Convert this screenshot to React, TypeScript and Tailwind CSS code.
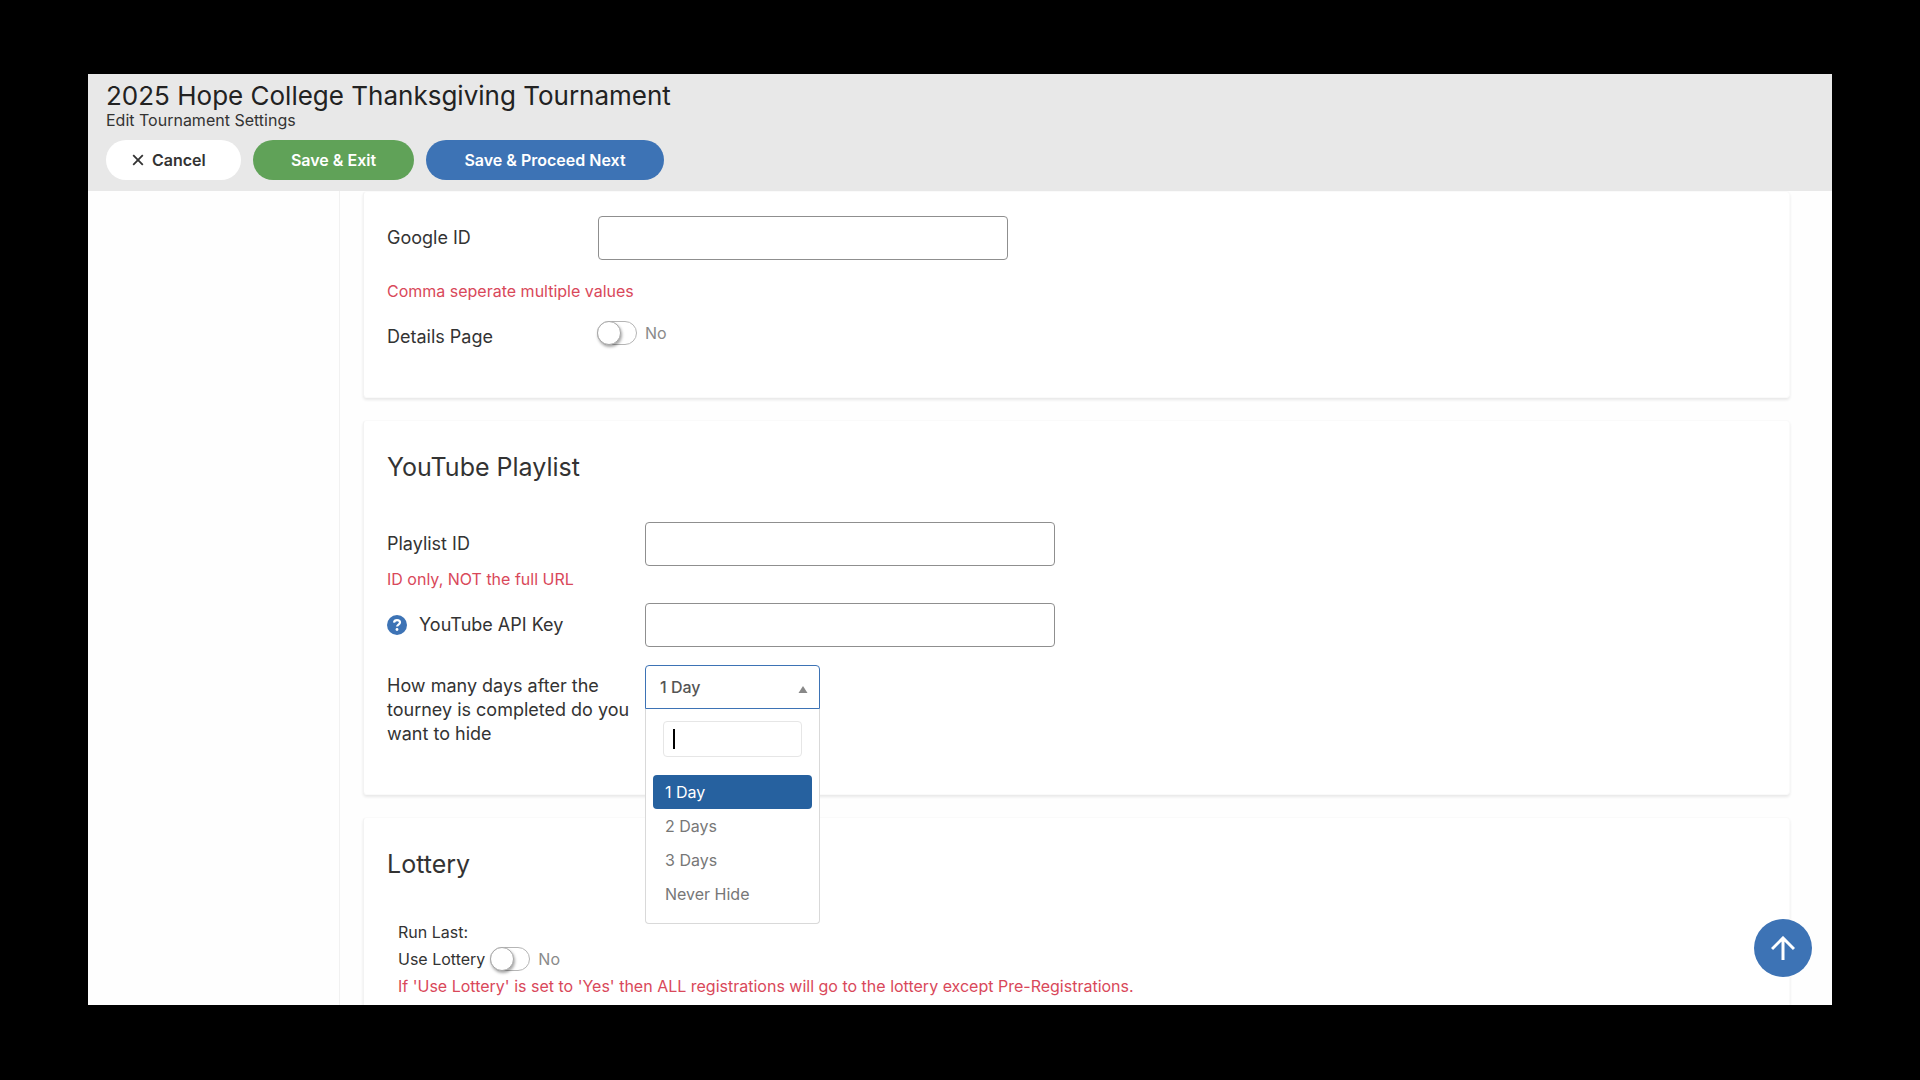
import { useState } from 'react';
import type { ReactNode } from 'react';

const DAY_OPTIONS = ['1 Day', '2 Days', '3 Days', 'Never Hide'];

function Card({ title, className = '', children }: { title?: string; className?: string; children: ReactNode }) {
  return (
    <section className={`rounded-sm border border-[#fafafa] border-l-[#f3f3f3] bg-white px-[23px] shadow-[0_2px_3px_rgba(0,0,0,0.09)] ${className}`}>
      {title && <h2 className="text-[25px] leading-8 text-[#333]">{title}</h2>}
      {children}
    </section>
  );
}

function Toggle({ id, checked, onChange }: { id: string; checked: boolean; onChange: (value: boolean) => void }) {
  return (
    <span className="flex items-center gap-2">
      <span className="relative flex h-6 w-10 shrink-0">
        <input
          id={id}
          type="checkbox"
          checked={checked}
          onChange={(e) => onChange(e.target.checked)}
          className="peer h-6 w-10 cursor-pointer appearance-none rounded-full border border-[#b5b5b5] bg-white checked:bg-[#3d73b5]"
        />
        <span className="pointer-events-none absolute top-0 left-0 size-6 rounded-full border border-[#a8a8a8] bg-white shadow-[1px_2px_3px_rgba(0,0,0,0.35)] peer-checked:left-4" />
      </span>
      <span className="text-base text-[#8a8a8a]">{checked ? 'Yes' : 'No'}</span>
    </span>
  );
}

function TextField({ id }: { id: string }) {
  const [value, setValue] = useState('');
  return (
    <input
      id={id}
      type="text"
      value={value}
      onChange={(e) => setValue(e.target.value)}
      className="h-11 w-[410px] rounded border border-[#8f8f8f] bg-white px-3 text-base outline-none focus:border-[#3d73b5]"
    />
  );
}

function DaysSelect({ id }: { id: string }) {
  const [selected, setSelected] = useState('1 Day');
  const [open, setOpen] = useState(true);
  const [search, setSearch] = useState('');
  const options = DAY_OPTIONS.filter((o) => o.toLowerCase().includes(search.toLowerCase()));

  return (
    <div className="relative h-11 w-[175px]">
      <select
        id={id}
        value={selected}
        onChange={(e) => setSelected(e.target.value)}
        onMouseDown={(e) => { e.preventDefault(); setOpen(!open); }}
        className="h-11 w-full appearance-none rounded-t border border-[#3d73b5] bg-white px-3.5 text-base font-medium text-[#555] outline-none"
      >
        {DAY_OPTIONS.map((o) => <option key={o}>{o}</option>)}
      </select>
      <svg viewBox="0 0 10 8" className="pointer-events-none absolute top-5 right-3 h-2 w-2.5 fill-[#888]">
        <path d="M5 1 9.500 8H.5z" />
      </svg>

      {open && (
        <div className="absolute top-full left-0 z-10 w-full rounded-b border border-t-0 border-[#d9d9d9] bg-white px-[7px] py-3">
          <div className="relative mx-2.5 mb-[18px]">
            <input
              type="text"
              aria-label="Search"
              value={search}
              onChange={(e) => setSearch(e.target.value)}
              className="h-9 w-full rounded border border-[#e6e6e6] px-3 text-base outline-none"
            />
            {!search && <span className="pointer-events-none absolute top-2 left-2.5 h-5 w-0.5 bg-black" />}
          </div>
          {options.map((o) => (
            <button
              key={o}
              type="button"
              onClick={() => { setSelected(o); setOpen(false); }}
              className={`block h-[34px] w-full rounded px-3 text-left text-base ${o === selected ? 'bg-[#26619f] text-white' : 'text-[#777]'}`}
            >
              {o}
            </button>
          ))}
        </div>
      )}
    </div>
  );
}

export default function App() {
  const [details, setDetails] = useState(false);
  const [lottery, setLottery] = useState(false);

  return (
    <div className="h-screen bg-black px-[88px] pt-[74px] pb-[75px] font-[Inter,'Liberation_Sans',sans-serif] text-lg leading-6 text-[#333]">
      <div className="relative flex h-full flex-col overflow-hidden bg-[#fefefe]">
        <header className="shrink-0 bg-[#e8e8e8] px-[18px] pt-1.5 pb-[11px]">
          <h1 className="text-[26px] leading-8 text-[#222]">2025 Hope College Thanksgiving Tournament</h1>
          <p className="text-base leading-4">Edit Tournament Settings</p>
          <div className="mt-3 flex items-center gap-3 text-base font-semibold">
            <button type="button" className="flex h-10 w-[135px] items-center gap-2 rounded-full bg-white pl-[26px]">
              <svg viewBox="0 0 10 10" className="size-3 stroke-[#333]" strokeWidth="1.500">
                <path d="M1 1l8 8M9 1L1 9" />
              </svg>
              Cancel
            </button>
            <button type="button" className="h-10 w-[161px] rounded-full bg-[#60a258] text-white">Save &amp; Exit</button>
            <button type="button" className="h-10 w-[238px] rounded-full bg-[#3d73b5] text-white">Save &amp; Proceed Next</button>
          </div>
        </header>

        <div className="flex min-h-0 flex-1">
          <aside className="w-[252px] shrink-0 border-r border-[#f1f1f1]" />
          <main className="flex min-w-0 flex-1 flex-col gap-[22px] pr-[42px] pl-[23px]">
            <Card className="shrink-0 pt-6 pb-12">
              <div className="flex items-center">
                <label htmlFor="google-id" className="w-[211px]">Google ID</label>
                <TextField id="google-id" />
              </div>
              <p className="mt-[19px] text-base leading-6 text-[#d9485a]">Comma seperate multiple values</p>
              <div className="mt-[18px] flex items-start">
                <label htmlFor="details-page" className="w-[210px] pt-1">Details Page</label>
                <Toggle id="details-page" checked={details} onChange={setDetails} />
              </div>
            </Card>

            <Card title="YouTube Playlist" className="shrink-0 pt-[30px] pb-12">
              <div className="mt-[39px] flex items-center">
                <label htmlFor="playlist-id" className="w-[258px]">Playlist ID</label>
                <TextField id="playlist-id" />
              </div>
              <p className="mt-px text-base leading-6 text-[#d9485a]">ID only, NOT the full URL</p>
              <div className="mt-3 flex items-center">
                <label htmlFor="api-key" className="flex w-[258px] items-center gap-3">
                  <svg viewBox="0 0 20 20" className="size-5 shrink-0">
                    <circle cx="10" cy="10" r="10" fill="#3d73b5" />
                    <path d="M7 7.600C7.200 5.900 8.400 5.100 10 5.100s3 .9 3 2.400c0 2-2.900 2.100-2.900 4" fill="none" stroke="#fff" strokeWidth="2.200" />
                    <circle cx="10" cy="14.500" r="1.400" fill="#fff" />
                  </svg>
                  YouTube API Key
                </label>
                <TextField id="api-key" />
              </div>
              <div className="mt-[18px] flex items-start">
                <label htmlFor="hide-days" className="w-[258px] pt-[9px] pr-3">
                  How many days after the tourney is completed do you want to hide
                </label>
                <DaysSelect id="hide-days" />
              </div>
            </Card>

            <Card title="Lottery" className="shrink-0 pt-[30px] pb-10">
              <div className="mt-10 px-[11px] text-base leading-6">
                <p>Run Last:</p>
                <div className="mt-[3px] flex items-center gap-[5px]">
                  <label htmlFor="use-lottery">Use Lottery</label>
                  <Toggle id="use-lottery" checked={lottery} onChange={setLottery} />
                </div>
                <p className="mt-[3px] text-[#d9485a]">
                  If 'Use Lottery' is set to 'Yes' then ALL registrations will go to the lottery except Pre-Registrations.
                </p>
              </div>
            </Card>
          </main>
        </div>

        <button
          type="button"
          aria-label="Back to top"
          className="absolute right-5 bottom-7 flex size-[58px] items-center justify-center rounded-full bg-[#3d73b5]"
        >
          <svg viewBox="0 0 24 24" className="size-6 fill-none stroke-white" strokeWidth="3">
            <path d="M12 24V2M1 13 12 2l11 11" />
          </svg>
        </button>
      </div>
    </div>
  );
}
